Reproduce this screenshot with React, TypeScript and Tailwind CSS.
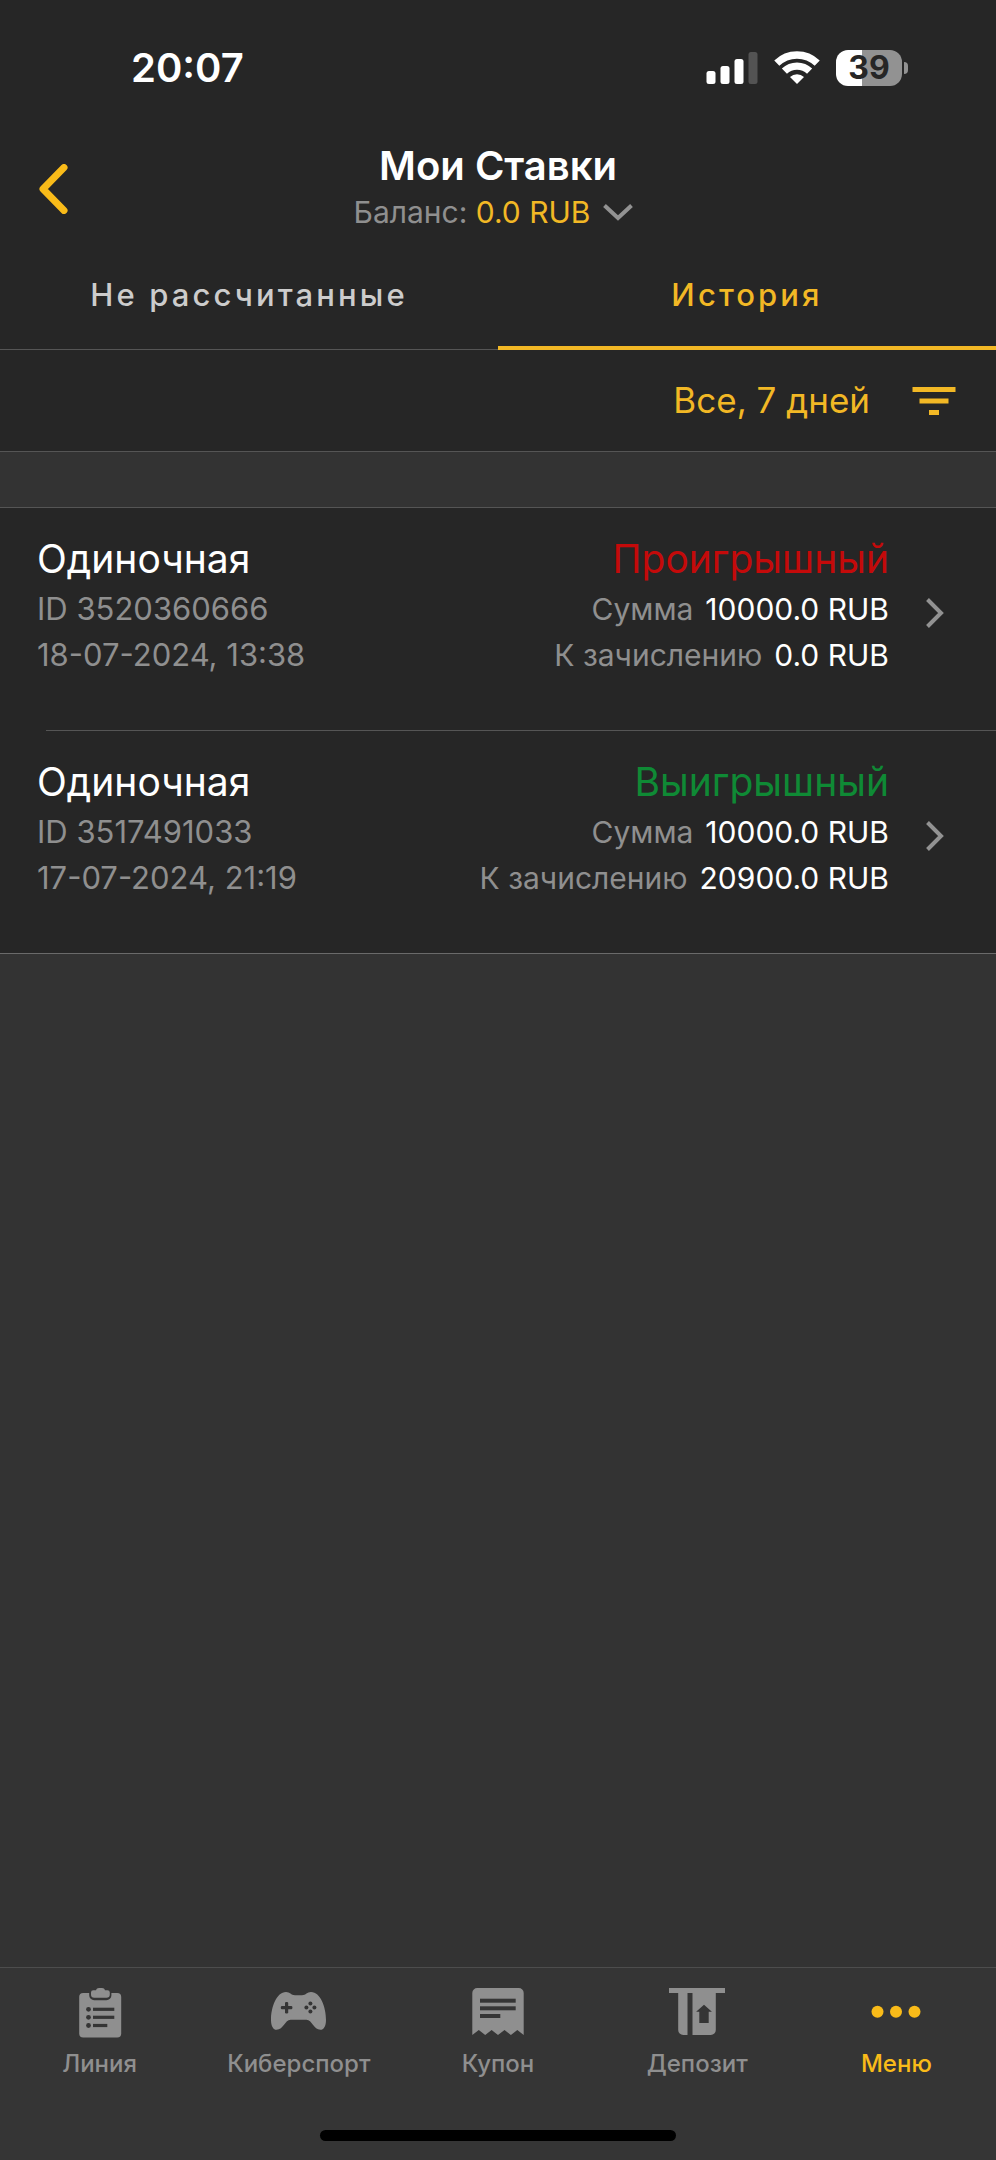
import React, { useState } from 'react';

type Bet = {
  id: string;
  type: string;
  date: string;
  status: 'lost' | 'won';
  stake: string;
  payout: string;
};

const bets: Bet[] = [
  {
    id: '3520360666',
    type: 'Одиночная',
    date: '18-07-2024, 13:38',
    status: 'lost',
    stake: '10000.0 RUB',
    payout: '0.0 RUB'
  },
  {
    id: '3517491033',
    type: 'Одиночная',
    date: '17-07-2024, 21:19',
    status: 'won',
    stake: '10000.0 RUB',
    payout: '20900.0 RUB'
  }
];

const statuses = {
  lost: { label: 'Проигрышный', color: 'text-[#c40a0a]' },
  won: { label: 'Выигрышный', color: 'text-[#0f8a35]' }
};

const tabs = [
  { id: 'open', name: 'Не рассчитанные' },
  { id: 'history', name: 'История' }
];

const LineIcon = () => (
  <svg viewBox="0 0 56 50" className="w-14 h-[50px]" fill="currentColor" aria-hidden="true">
    <rect x="7.2" y="5" width="42" height="44.5" rx="4" />
    <path d="M17.2 4h22.2v3.2a5 5 0 0 1-5 5H22.2a5 5 0 0 1-5-5Z" fill="#353535" />
    <path d="M24 2.2C24.5.8 25.5 0 27 0h3c1.5 0 2.5.8 3 2.2h2.5a2.3 2.3 0 0 1 2.3 2.3v2a3.3 3.3 0 0 1-3.3 3.3H22.3A3.3 3.3 0 0 1 19 6.5v-2a2.3 2.3 0 0 1 2.3-2.3Z" />
    <g fill="#353535">
      <circle cx="16.5" cy="21.3" r="2.4" />
      <circle cx="16.5" cy="29.3" r="2.4" />
      <circle cx="16.5" cy="37.5" r="2.4" />
      <rect x="21" y="19.7" width="21.3" height="3.2" />
      <rect x="21" y="27.7" width="21.3" height="3.2" />
      <rect x="21" y="35.9" width="14.3" height="3.2" />
    </g>
  </svg>
);

const GamepadIcon = () => (
  <svg viewBox="0 0 56 50" className="w-14 h-[50px]" fill="currentColor" aria-hidden="true">
    <path d="M15 4c4 0 5 3.2 9 3.2h7C35 7.2 36 4 40 4c9.500 0 15 15 15 28 0 6.500-2.500 9.800-5.500 9.800-7 0-8.500-10-14-10h-16c-5.500 0-7 10-14 10C2.500 41.800 0 38.500 0 32 0 19 5.500 4 15 4Z" />
    <g fill="#353535">
      <rect x="9.8" y="18.1" width="11.6" height="3.2" rx="1.2" />
      <rect x="14" y="13.9" width="3.2" height="11.6" rx="1.2" />
      <circle cx="39.4" cy="15.4" r="2" />
      <circle cx="39.4" cy="23.4" r="2" />
      <circle cx="35.4" cy="19.4" r="2" />
      <circle cx="43.4" cy="19.4" r="2" />
    </g>
  </svg>
);

const CouponIcon = () => (
  <svg viewBox="0 0 56 50" className="w-14 h-[50px]" fill="currentColor" aria-hidden="true">
    <path d="M2.3 47V5a5 5 0 0 1 5-5h41.4a5 5 0 0 1 5 5v42l-6.4-5-6.4 5-6.4-5L28 47l-6.4-5-6.4 5-6.4-5Z" />
    <g fill="#353535">
      <rect x="10" y="10.7" width="35.7" height="4" />
      <rect x="10" y="18.3" width="35.7" height="4" />
      <rect x="10" y="26" width="20.3" height="4" />
    </g>
  </svg>
);

const DepositIcon = () => (
  <svg viewBox="0 0 56 50" className="w-14 h-[50px]" fill="currentColor" aria-hidden="true">
    <path d="M0 0h56v5h-9.2v37a5 5 0 0 1-5 5H23.5V5h-5v42h-4.3a5 5 0 0 1-5-5V5H0Z" />
    <path d="M35 16.7l7.9 7h-3.2V35h-9.4V23.7h-3.2Z" fill="#353535" />
  </svg>
);

const MenuIcon = () => (
  <svg viewBox="0 0 56 50" className="w-14 h-[50px]" fill="currentColor" aria-hidden="true">
    <circle cx="9.5" cy="23.7" r="6" />
    <circle cx="28" cy="23.7" r="6" />
    <circle cx="46.5" cy="23.7" r="6" />
  </svg>
);

const navItems = [
  { id: 'line', name: 'Линия', Icon: LineIcon },
  { id: 'esports', name: 'Киберспорт', Icon: GamepadIcon },
  { id: 'coupon', name: 'Купон', Icon: CouponIcon },
  { id: 'deposit', name: 'Депозит', Icon: DepositIcon },
  { id: 'menu', name: 'Меню', Icon: MenuIcon }
];

const StatusBar = () => (
  <div className="flex h-[136px] items-center justify-between pl-[131px] pr-[88px] text-white">
    <span className="text-[40px] font-semibold">20:07</span>
    <div className="flex items-center gap-4">
      <svg viewBox="0 0 52 34" className="w-[52px] h-[34px]" fill="currentColor" aria-hidden="true">
        <rect x="0.5" y="20" width="9" height="13" rx="2.5" />
        <rect x="14.5" y="15" width="9" height="18" rx="2.5" />
        <rect x="28.5" y="8" width="9" height="25" rx="2.5" />
        <rect x="42.5" y="1" width="9" height="32" rx="2.5" fill="#535353" />
      </svg>
      <svg viewBox="0 0 46 34" className="w-[46px] h-[34px]" fill="none" stroke="currentColor" strokeWidth="7.3" aria-hidden="true">
        <path d="M2.8 12.2A29 29 0 0 1 43.2 12.2" />
        <path d="M10.4 20.2A18 18 0 0 1 35.6 20.2" />
        <path d="M23 33l-7-7a10.5 10.5 0 0 1 14 0Z" fill="currentColor" stroke="none" />
      </svg>
      <div className="flex items-center gap-[2px]">
        <div className="flex h-9 w-[66px] items-center justify-center rounded-xl bg-linear-to-r from-white from-40% to-[#929292] to-40% text-[32px] font-bold text-[#262626]">
          39
        </div>
        <div className="h-3 w-1 rounded-r-full bg-[#929292]" />
      </div>
    </div>
  </div>
);

const BetRow = ({ bet }: { bet: Bet }) => (
  <button type="button" className="flex w-full items-center pt-6 pb-[52px] pl-[37px] pr-[51px]">
    <div className="flex-1 text-left text-[31px] leading-[46px] text-[#8f8f8f]">
      <div className="text-[39px] leading-[54px] text-white">{bet.type}</div>
      <div>ID {bet.id}</div>
      <div>{bet.date}</div>
    </div>
    <div className="flex flex-col items-end text-[30px] leading-[46px] text-[#8f8f8f]">
      <div className={`text-[39px] leading-[54px] ${statuses[bet.status].color}`}>
        {statuses[bet.status].label}
      </div>
      <div className="flex gap-3">
        Сумма <span className="text-white">{bet.stake}</span>
      </div>
      <div className="flex gap-3">
        К зачислению <span className="text-white">{bet.payout}</span>
      </div>
    </div>
    <div className="pt-4 pl-9">
      <svg viewBox="0 0 20 32" className="w-5 h-8" fill="none" stroke="#929292" strokeWidth="4" aria-hidden="true">
        <path d="M2.5 2.5L16 16L2.5 29.5" />
      </svg>
    </div>
  </button>
);

const App = () => {
  const [activeTab, setActiveTab] = useState('history');
  const [activeNav, setActiveNav] = useState('menu');

  return (
    <div className="flex min-h-screen w-full flex-col bg-[#333333] font-['Inter','Liberation_Sans',sans-serif]">
      <div className="bg-[#262626]">
        <StatusBar />

        {/* Header */}
        <header className="grid grid-cols-[1fr_auto_1fr] items-center pt-[7px] pb-[5px]">
          <button type="button" aria-label="Назад" className="justify-self-start pl-[38px] text-[#f9bb19]">
            <svg viewBox="0 0 32 50" className="w-8 h-[50px]" fill="none" stroke="currentColor" strokeWidth="7" strokeLinecap="round" strokeLinejoin="round" aria-hidden="true">
              <path d="M26 3.5L5 25L26 46.5" />
            </svg>
          </button>
          <div className="flex flex-col items-center">
            <h1 className="text-[40px] leading-[46px] font-semibold text-white">Мои Ставки</h1>
            <button type="button" className="flex items-center gap-3 pr-2 text-[30px] leading-[46px] text-[#8f8f8f]">
              <span>
                Баланс: <span className="text-[#f2b825]">0.0 RUB</span>
              </span>
              <svg viewBox="0 0 32 18" className="w-8 h-[18px]" fill="none" stroke="#929292" strokeWidth="4" aria-hidden="true">
                <path d="M2.5 2.5L16 15L29.5 2.5" />
              </svg>
            </button>
          </div>
        </header>

        {/* Tabs */}
        <div role="tablist" className="grid grid-cols-2">
          {tabs.map((tab) => (
            <button
              key={tab.id}
              type="button"
              role="tab"
              aria-selected={activeTab === tab.id}
              onClick={() => setActiveTab(tab.id)}
              className={`h-[110px] text-[31px] font-medium tracking-widest ${
                activeTab === tab.id
                  ? 'border-b-4 border-[#f2b825] pt-1 text-[#f2b825]'
                  : 'border-b border-[#555555] pt-px text-[#cccccc]'
              }`}
            >
              {tab.name}
            </button>
          ))}
        </div>

        {/* Filter */}
        <div className="flex h-[102px] items-center justify-end border-b border-[#555555] pr-10">
          <button type="button" className="flex items-center gap-[42px] text-[35px] text-[#f2b825]">
            Все, 7 дней
            <svg viewBox="0 0 44 28" className="w-11 h-7" fill="currentColor" aria-hidden="true">
              <rect x="0.5" width="43" height="5" />
              <rect x="7.5" y="11.5" width="29" height="5" />
              <rect x="17" y="23" width="10" height="5" />
            </svg>
          </button>
        </div>
      </div>

      {/* Bets */}
      <main className="flex-1 pt-[55px]">
        <ul className="border-t border-b border-t-[#555555] border-b-[#6a6a6a] bg-[#262626]">
          {bets.map((bet, index) => (
            <li key={bet.id}>
              {index > 0 && <div className="ml-[46px] h-px bg-[#555555]" />}
              <BetRow bet={bet} />
            </li>
          ))}
        </ul>
      </main>

      {/* Bottom navigation */}
      <footer className="border-t border-[#4d4d4d] bg-[#353535] pt-5 pb-[19px]">
        <nav className="grid grid-cols-5">
          {navItems.map(({ id, name, Icon }) => (
            <a
              key={id}
              href={`#${id}`}
              onClick={() => setActiveNav(id)}
              className={`flex flex-col items-center gap-[10px] text-2xl leading-8 font-medium ${
                activeNav === id ? 'text-[#f9bb19]' : 'text-[#8f8f8f]'
              }`}
            >
              <Icon />
              {name}
            </a>
          ))}
        </nav>
        <div className="mx-auto mt-[50px] h-[11px] w-[356px] rounded-full bg-black" />
      </footer>
    </div>
  );
};

export default App;
